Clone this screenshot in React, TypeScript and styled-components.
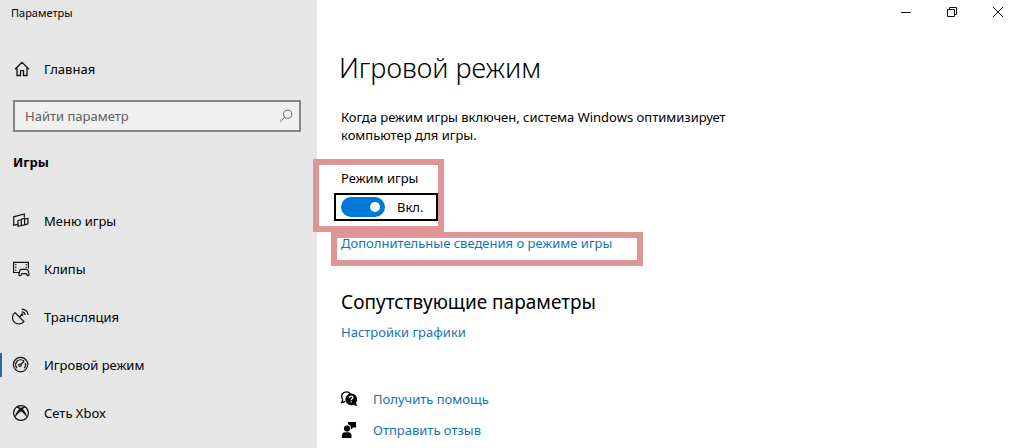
import React from "react";
import styled, { createGlobalStyle } from "styled-components";

const GlobalStyle = createGlobalStyle`
  *, *::before, *::after { box-sizing: border-box; }
  body {
    margin: 0;
    background: #ffffff;
    color: #000000;
    font: 13px/18px "Noto Sans", "Open Sans", sans-serif;
  }
  button, input { font: inherit; color: inherit; }
  h1, h2, p { margin: 0; }
`;

const Window = styled.div`
  display: flex;
  min-height: 100vh;
`;

const Sidebar = styled.aside`
  flex: 0 0 317px;
  background: #e6e6e6;
`;

const WindowTitle = styled.div`
  padding: 4px 11px;
  font-size: 11px;
`;

const NavItem = styled.a<{ $active?: boolean }>`
  display: flex;
  align-items: center;
  gap: 14px;
  height: 48px;
  padding-left: 12px;
  color: inherit;
  text-decoration: none;
  background: linear-gradient(#1f6f9f, #1f6f9f) no-repeat 0 center /
    ${(p) => (p.$active ? "2px 24px" : "0 0")};
`;

const HomeItem = styled(NavItem)`
  margin-top: 19px;
`;

const NavIcon = styled.svg`
  flex: none;
  width: 18px;
  height: 18px;
  fill: none;
  stroke: #111111;
`;

const Search = styled.label`
  display: flex;
  align-items: center;
  height: 32px;
  margin: 7px 16px 0 13px;
  padding: 0 6px 0 10px;
  border: 2px solid #858585;
  background: #f0f0f0;
`;

const SearchInput = styled.input`
  flex: 1;
  min-width: 0;
  padding: 0;
  border: 0;
  outline: 0;
  background: transparent;
  &::placeholder { color: #606060; opacity: 1; }
`;

const SearchIcon = styled.svg`
  width: 14px;
  height: 14px;
  fill: none;
  stroke: #666666;
`;

const GroupTitle = styled.h2`
  margin: 18px 13px 23px;
  font-size: 13px;
  line-height: 24px;
  font-weight: 700;
`;

const Main = styled.main`
  flex: 1;
  min-width: 0;
`;

const Controls = styled.div`
  display: flex;
  justify-content: flex-end;
  gap: 22px;
`;

const ControlButton = styled.button`
  display: flex;
  align-items: center;
  justify-content: center;
  width: 24px;
  height: 24px;
  padding: 0;
  border: 0;
  background: none;
`;

const Content = styled.div`
  padding: 26px 24px 0;
`;

const PageTitle = styled.h1`
  margin-left: -2px;
  font-size: 27px;
  line-height: 36px;
  font-weight: 300;
`;

const Description = styled.p`
  max-width: 420px;
  margin-top: 22px;
`;

const Marked = styled.div<{ $inset: string }>`
  position: relative;
  width: fit-content;
  &::after {
    content: "";
    position: absolute;
    inset: ${(p) => p.$inset};
    border: 6px solid #df9495;
    pointer-events: none;
  }
`;

const Setting = styled(Marked)`
  margin-top: 25px;
`;

const SettingName = styled.label`
  display: block;
`;

const SwitchBox = styled.div`
  display: flex;
  align-items: center;
  gap: 12px;
  width: 104px;
  height: 28px;
  margin: 6px 0 0 -7px;
  padding-left: 5px;
  border: 2px solid #000000;
`;

const Switch = styled.input`
  appearance: none;
  display: flex;
  align-items: center;
  width: 44px;
  height: 20px;
  margin: 0;
  padding: 0 5px;
  border-radius: 10px;
  background: #7a7a7a;
  &::before {
    content: "";
    width: 10px;
    height: 10px;
    border-radius: 50%;
    background: #ffffff;
  }
  &:checked { background: #0078d7; justify-content: flex-end; }
`;

const Link = styled.a`
  color: #1673b1;
  text-decoration: none;
`;

const MoreInfo = styled(Marked)`
  margin-top: 13px;
`;

const SectionTitle = styled.h2`
  margin: 36px 0 7px;
  font-size: 19px;
  line-height: 28px;
  font-weight: 400;
`;

const SupportLinks = styled.div`
  display: flex;
  flex-direction: column;
  gap: 13px;
  margin-top: 49px;
`;

const SupportRow = styled.div`
  display: flex;
  align-items: center;
  gap: 16px;
`;

const SupportIcon = styled.svg`
  width: 16px;
  height: 18px;
`;

const HomeIcon = () => (
  <NavIcon viewBox="0 0 18 18" strokeWidth="1.3">
    <path d="M3 9.2 10 2.4l7 6.8M5 8v7.5h3.5v-4.8h3v4.8H15V8" />
  </NavIcon>
);

const MenuIcon = () => (
  <NavIcon viewBox="0 0 18 18" strokeWidth="1.2">
    <path d="M6 12.2 1.7 13.300V4.800L12.300 2v3.500M6 8.500l3.300-.8v5.800L6 14.300zM9.300 7.200l3.300-.8v6.400l-3.300.8M12.600 7l3.300-.6v5.500l-3.300.9" />
  </NavIcon>
);

const ClipsIcon = () => (
  <NavIcon viewBox="0 0 18 18" strokeWidth="1.2">
    <path d="M7 12.5H1.600V2.400h14.800v6" />
    <path d="M3.800 4v7.500M14.200 4v4" strokeDasharray="1.2 1.6" />
    <path d="M9.200 9.300h5.600l1.300 1.100.9 4c.2 1.600-1.400 1.700-2.100.5l-.8-1.300H9.900L9.100 15c-.7 1.100-2.400 1-2.100-.6l.9-4z" />
  </NavIcon>
);

const BroadcastIcon = () => (
  <NavIcon viewBox="0 0 18 18" strokeWidth="1.2">
    <path d="M2.900 4.600a6.400 6.400 0 1 0 9 9zM7.300 9.200l2.500-2.500" />
    <circle cx="10.1" cy="6.600" r=".8" />
    <path d="M9.700 3.800c1.900-.1 3.400 1.300 3.400 3.300M9.700 1.100c3.500 0 6.300 2.500 6.400 6" />
  </NavIcon>
);

const GaugeIcon = () => (
  <NavIcon viewBox="0 0 18 18" strokeWidth="1.2">
    <circle cx="8.600" cy="8.600" r="7.200" />
    <path d="M5.100 12.300A4.900 4.900 0 1 1 12.100 5.200M13.200 7a4.900 4.900 0 0 1-1.100 5.300" />
    <circle cx="8" cy="9.200" r="1.2" />
    <path d="m8.900 8.300 3.200-3.100" />
  </NavIcon>
);

const XboxIcon = () => (
  <NavIcon viewBox="0 0 18 18" strokeWidth="1.2">
    <circle cx="9" cy="9" r="7.400" />
    <path
      d="M4 2.900c2-.5 3.800.3 5 1.200 1.200-.9 3-1.700 5-1.200-1 .2-2.300 1.200-3.200 2.300 2 2.100 4.600 5.600 4 8.100C13.600 11.200 11 8.900 9 7.300 7 8.900 4.400 11.200 3.200 13.300c-.6-2.500 2-6 4-8.100C6.300 4.100 5 3.100 4 2.900z"
      fill="#111111"
      stroke="none"
    />
  </NavIcon>
);

const navItems = [
  { label: "Меню игры", Icon: MenuIcon },
  { label: "Клипы", Icon: ClipsIcon },
  { label: "Трансляция", Icon: BroadcastIcon },
  { label: "Игровой режим", Icon: GaugeIcon, active: true },
  { label: "Сеть Xbox", Icon: XboxIcon },
];

const controls = [
  { label: "Свернуть", path: "M1 6.500h10" },
  { label: "Восстановить", path: "M1.500 3.500h7v7h-7zM3.500 3.500v-2h7v7h-2" },
  { label: "Закрыть", path: "m1 1 10 10M11 1 1 11" },
];

export default function App() {
  return (
    <Window>
      <GlobalStyle />
      <Sidebar>
        <WindowTitle>Параметры</WindowTitle>
        <HomeItem href="#home">
          <HomeIcon />
          Главная
        </HomeItem>
        <Search>
          <SearchInput type="text" placeholder="Найти параметр" aria-label="Найти параметр" />
          <SearchIcon viewBox="0 0 14 14">
            <circle cx="8.700" cy="5.200" r="4.100" />
            <path d="M5.800 8.100 1 12.900" />
          </SearchIcon>
        </Search>
        <GroupTitle>Игры</GroupTitle>
        <nav>
          {navItems.map(({ label, Icon, active }) => (
            <NavItem key={label} href="#section" $active={active} aria-current={active ? "page" : undefined}>
              <Icon />
              {label}
            </NavItem>
          ))}
        </nav>
      </Sidebar>
      <Main>
        <Controls>
          {controls.map(({ label, path }) => (
            <ControlButton key={label} type="button" aria-label={label}>
              <svg width="12" height="12" viewBox="0 0 12 12" fill="none" stroke="#111111">
                <path d={path} />
              </svg>
            </ControlButton>
          ))}
        </Controls>
        <Content>
          <PageTitle>Игровой режим</PageTitle>
          <Description>
            Когда режим игры включен, система Windows оптимизирует компьютер для игры.
          </Description>
          <Setting $inset="-10px -6px -11px -28px">
            <SettingName htmlFor="game-mode">Режим игры</SettingName>
            <SwitchBox>
              <Switch id="game-mode" type="checkbox" role="switch" defaultChecked />
              <span>Вкл.</span>
            </SwitchBox>
          </Setting>
          <MoreInfo $inset="-2px -31px -14px -10px">
            <Link href="#more">Дополнительные сведения о режиме игры</Link>
          </MoreInfo>
          <SectionTitle>Сопутствующие параметры</SectionTitle>
          <Link href="#graphics">Настройки графики</Link>
          <SupportLinks>
            <SupportRow>
              <SupportIcon viewBox="0 0 16 18">
                <path d="M1.800 9.500C-.8 5.500 1.500 1.800 5.500 1.800c1.700 0 3.100.7 4 2M1.800 9.500.8 12.300l3.500-.8" fill="none" stroke="#000" strokeWidth="1.300" />
                <path d="M10.200 3.600a5.800 5.800 0 0 1 4.900 8.900l.9 3.700-3.400-1.500A5.800 5.800 0 1 1 10.200 3.600z" />
                <path d="M8.600 7.700c0-2.200 3.300-2.100 3.300-.2 0 1.300-1.700 1.300-1.700 2.700M10.200 11.300v1.300" fill="none" stroke="#fff" strokeWidth="1.200" />
              </SupportIcon>
              <Link href="#help">Получить помощь</Link>
            </SupportRow>
            <SupportRow>
              <SupportIcon viewBox="0 0 16 18">
                <circle cx="6" cy="7.500" r="3.100" />
                <path d="M1 17v-2.500c0-2.200 1.300-3.300 3-3.300h3.500c1.800 0 3 1.200 3 3.300V17zM7 1h8v5.500h-3L9.800 8.800V5.500C9.200 4.400 8.300 3.700 7 3.500z" />
              </SupportIcon>
              <Link href="#feedback">Отправить отзыв</Link>
            </SupportRow>
          </SupportLinks>
        </Content>
      </Main>
    </Window>
  );
}
